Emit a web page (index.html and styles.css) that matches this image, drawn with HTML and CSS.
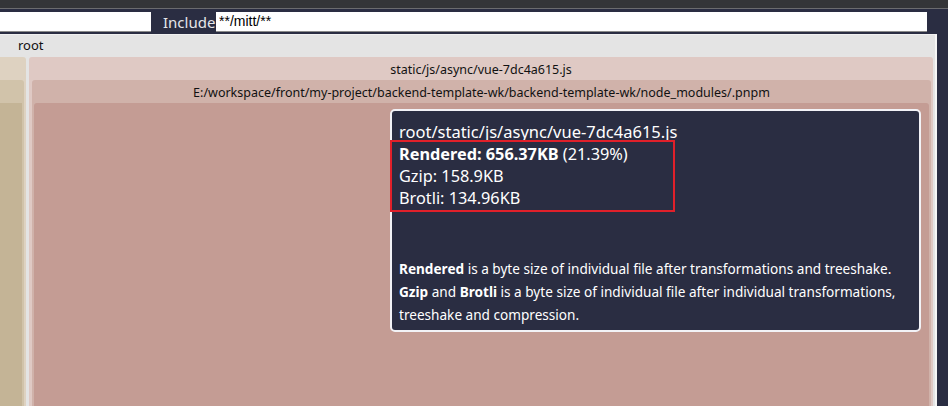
FILE: index.html
```html
<!DOCTYPE html>
<html>
<head>
<meta charset="utf-8">
<link rel="stylesheet" href="styles.css">
</head>
<body>
<div class="topband"></div>
<div class="filters">
  <input class="inp inp-exclude" type="text" value="">
  <label class="lbl">Include</label>
  <input class="inp inp-include" type="text" value="**/mitt/**">
</div>
<div class="map">
  <div class="node root">
    <div class="hdr hdr-left">root</div>
    <div class="kids">
      <div class="node tan1">
        <div class="hdr"></div>
        <div class="node tan2">
          <div class="hdr"></div>
          <div class="node tan3"></div>
        </div>
      </div>
      <div class="node pink1">
        <div class="hdr">static/js/async/vue-7dc4a615.js</div>
        <div class="node pink2">
          <div class="hdr">E:/workspace/front/my-project/backend-template-wk/backend-template-wk/node_modules/.pnpm</div>
          <div class="node pink3"></div>
        </div>
      </div>
    </div>
  </div>
  <div class="tooltip">
    <div class="tt-title">root/static/js/async/vue-7dc4a615.js</div>
    <div class="tt-line"><b>Rendered: 656.37KB</b> (21.39%)</div>
    <div class="tt-line">Gzip: 158.9KB</div>
    <div class="tt-line">Brotli: 134.96KB</div>
    <div class="tt-note">
      <div><b>Rendered</b> is a byte size of individual file after transformations and treeshake.</div>
      <div><b>Gzip</b> and <b>Brotli</b> is a byte size of individual file after individual transformations,</div>
      <div>treeshake and compression.</div>
    </div>
  </div>
  <div class="highlight"></div>
</div>
</body>
</html>
```
FILE: styles.css
```css
html, body {
  margin: 0;
  padding: 0;
  height: 100%;
  overflow: hidden;
}
body {
  background: #2a2d42;
  font-family: "Noto Sans", "Open Sans", sans-serif;
  display: flex;
  flex-direction: column;
}
.topband {
  height: 8px;
  background: #343538;
  border-bottom: 1px solid #6b6b6e;
  flex: none;
}
.filters {
  height: 25px;
  display: flex;
  align-items: center;
  flex: none;
}
.inp {
  height: 20px;
  box-sizing: border-box;
  border: none;
  border-bottom: 1px solid #8a8a8a;
  background: #fff;
  font-family: "Liberation Sans", sans-serif;
  font-size: 14px;
  padding: 0 3px;
  margin: 0;
  outline: none;
}
.inp-exclude {
  width: 151px;
}
.lbl {
  color: #e6e6ea;
  font-size: 15px;
  margin: 0 5px 0 12px;
  width: 48px;
}
.inp-include {
  width: 711px;
}
.map {
  flex: 1;
  position: relative;
  display: flex;
  padding-right: 11px;
  min-height: 0;
}
.node {
  box-sizing: border-box;
  display: flex;
  flex-direction: column;
}
.root {
  flex: 1;
  background: #e4e4e4;
  border-right: 2px solid #f6f6f6;
  border-top: 1px solid #f0f0f0;
}
.hdr {
  flex: none;
  height: 23px;
  line-height: 25px;
  font-size: 12.5px;
  color: #111;
  text-align: center;
  white-space: nowrap;
  overflow: hidden;
}
.hdr-left {
  text-align: left;
  padding-left: 18px;
  font-size: 13px;
  height: 22px;
  line-height: 21px;
}
.kids {
  flex: 1;
  display: flex;
  gap: 3px;
  padding-right: 2px;
  min-height: 0;
}
.tan1 {
  width: 26px;
  background: #ded2c1;
  border-radius: 0 3px 0 0;
}
.tan2 {
  flex: 1;
  background: #d1c3aa;
  margin-right: 2px;
  border-radius: 0 3px 0 0;
}
.tan3 {
  flex: 1;
  background: #c4b496;
  margin-right: 2px;
}
.pink1 {
  flex: 1;
  background: #dfc9c4;
  border-radius: 3px 3px 0 0;
}
.pink2 {
  flex: 1;
  background: #d0b2aa;
  margin: 0 2px 0 3px;
  border-radius: 3px 3px 0 0;
}
.pink3 {
  flex: 1;
  background: #c49c94;
  margin: 0 2px 0 2px;
  border-radius: 3px 3px 0 0;
}
.tooltip {
  position: absolute;
  left: 390px;
  top: 75px;
  width: 531px;
  height: 223px;
  box-sizing: border-box;
  background: #2a2d42;
  border: 2px solid #f2f2f6;
  border-radius: 5px;
  color: #fff;
  padding: 9px 7px;
}
.tt-title {
  font-size: 16.5px;
  line-height: 23px;
}
.tt-line {
  font-size: 16.3px;
  line-height: 22px;
}
.tt-note {
  margin-top: 48px;
  font-size: 13.6px;
  line-height: 23px;
}
.highlight {
  position: absolute;
  left: 390px;
  top: 106px;
  width: 285px;
  height: 72px;
  box-sizing: border-box;
  border: 2px solid #e0202a;
}
```
